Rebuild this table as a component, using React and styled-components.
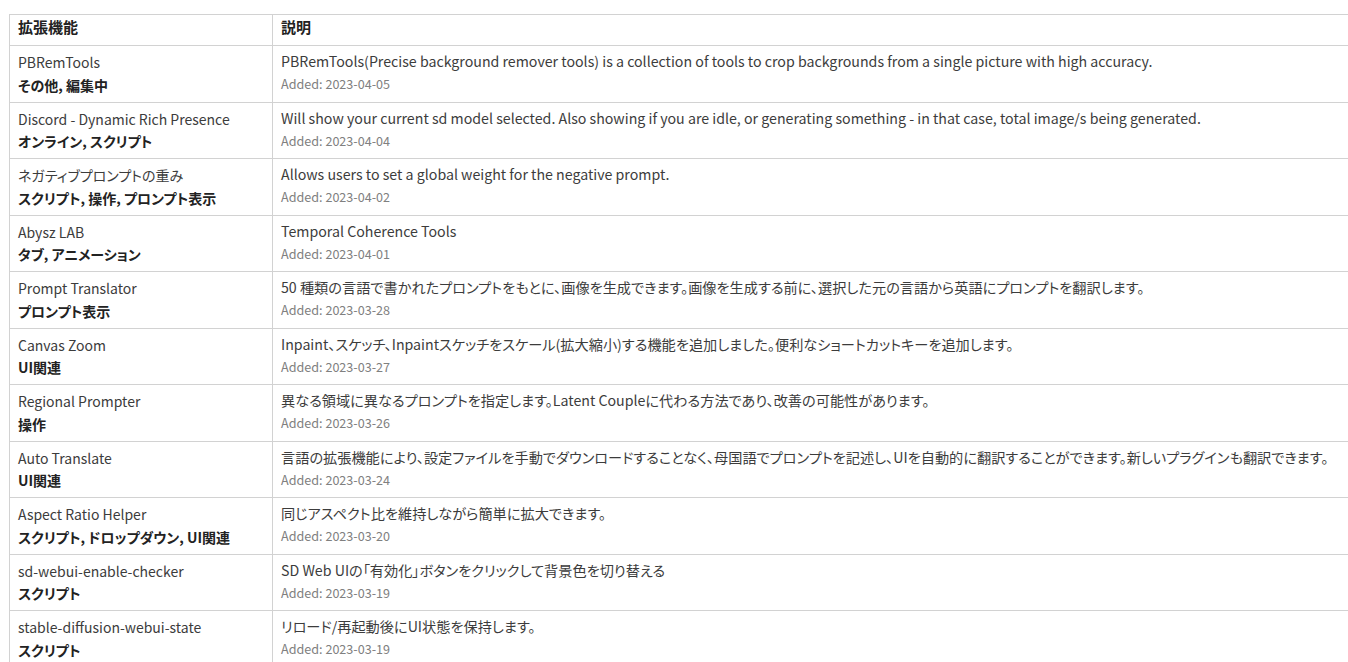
import React from 'react';
import styled, { createGlobalStyle } from 'styled-components';

const COLORS = {
  border: '#d2d2d2',
  text: '#3c3c3c',
  strong: '#222',
  muted: '#808080',
};

const GlobalStyle = createGlobalStyle`
  html, body {
    margin: 0;
    padding: 0;
    background: #fff;
    overflow: hidden;
  }
  body {
    font-family: 'Noto Sans CJK JP', 'Noto Sans', sans-serif;
    font-feature-settings: 'palt';
    color: ${COLORS.text};
  }
`;

const Page = styled.div`
  padding: 14px 0 0 9px;
  width: 1360px;
`;

const Table = styled.table`
  border-collapse: collapse;
  table-layout: fixed;
  width: 1360px;
  border-top: 1px solid ${COLORS.border};
  border-left: 1px solid ${COLORS.border};
`;

const HeadCell = styled.th`
  text-align: left;
  font-weight: 700;
  font-size: 15px;
  line-height: 22px;
  padding: 1px 8px 7px;
  color: ${COLORS.strong};
  border-right: 1px solid ${COLORS.border};
  border-bottom: 1px solid ${COLORS.border};
  width: ${(p) => (p.$narrow ? '246px' : 'auto')};
`;

const Cell = styled.td`
  vertical-align: top;
  padding: 5px 8px 5px;
  border-right: 1px solid ${COLORS.border};
  border-bottom: 1px solid ${COLORS.border};
`;

const Name = styled.div`
  font-size: 14px;
  line-height: 22.75px;
  color: ${COLORS.text};
  white-space: nowrap;
`;

const Tags = styled.div`
  font-size: 14px;
  line-height: 22.75px;
  font-weight: 700;
  color: ${COLORS.strong};
  white-space: nowrap;
`;

const Desc = styled.div`
  font-size: 14.2px;
  line-height: 20px;
  color: ${COLORS.text};
  white-space: nowrap;
`;

const Added = styled.div`
  font-size: 12.6px;
  line-height: 20px;
  margin-top: 3px;
  color: ${COLORS.muted};
`;

const rows = [
  {
    name: 'PBRemTools',
    tags: 'その他, 編集中',
    desc: 'PBRemTools(Precise background remover tools) is a collection of tools to crop backgrounds from a single picture with high accuracy.',
    date: '2023-04-05',
  },
  {
    name: 'Discord - Dynamic Rich Presence',
    tags: 'オンライン, スクリプト',
    desc: 'Will show your current sd model selected. Also showing if you are idle, or generating something - in that case, total image/s being generated.',
    date: '2023-04-04',
  },
  {
    name: 'ネガティブプロンプトの重み',
    tags: 'スクリプト, 操作, プロンプト表示',
    desc: 'Allows users to set a global weight for the negative prompt.',
    date: '2023-04-02',
  },
  {
    name: 'Abysz LAB',
    tags: 'タブ, アニメーション',
    desc: 'Temporal Coherence Tools',
    date: '2023-04-01',
  },
  {
    name: 'Prompt Translator',
    tags: 'プロンプト表示',
    desc: '50 種類の言語で書かれたプロンプトをもとに、画像を生成できます。画像を生成する前に、選択した元の言語から英語にプロンプトを翻訳します。',
    date: '2023-03-28',
  },
  {
    name: 'Canvas Zoom',
    tags: 'UI関連',
    desc: 'Inpaint、スケッチ、Inpaintスケッチをスケール(拡大縮小)する機能を追加しました。便利なショートカットキーを追加します。',
    date: '2023-03-27',
  },
  {
    name: 'Regional Prompter',
    tags: '操作',
    desc: '異なる領域に異なるプロンプトを指定します。Latent Coupleに代わる方法であり、改善の可能性があります。',
    date: '2023-03-26',
  },
  {
    name: 'Auto Translate',
    tags: 'UI関連',
    desc: '言語の拡張機能により、設定ファイルを手動でダウンロードすることなく、母国語でプロンプトを記述し、UIを自動的に翻訳することができます。新しいプラグインも翻訳できます。',
    date: '2023-03-24',
  },
  {
    name: 'Aspect Ratio Helper',
    tags: 'スクリプト, ドロップダウン, UI関連',
    desc: '同じアスペクト比を維持しながら簡単に拡大できます。',
    date: '2023-03-20',
  },
  {
    name: 'sd-webui-enable-checker',
    tags: 'スクリプト',
    desc: 'SD Web UIの「有効化」ボタンをクリックして背景色を切り替える',
    date: '2023-03-19',
  },
  {
    name: 'stable-diffusion-webui-state',
    tags: 'スクリプト',
    desc: 'リロード/再起動後にUI状態を保持します。',
    date: '2023-03-19',
  },
];

export default function App() {
  return (
    <>
      <GlobalStyle />
      <Page>
        <Table>
          <thead>
            <tr>
              <HeadCell $narrow>拡張機能</HeadCell>
              <HeadCell>説明</HeadCell>
            </tr>
          </thead>
          <tbody>
            {rows.map((r) => (
              <tr key={r.name}>
                <Cell>
                  <Name>{r.name}</Name>
                  <Tags>{r.tags}</Tags>
                </Cell>
                <Cell>
                  <Desc>{r.desc}</Desc>
                  <Added>Added: {r.date}</Added>
                </Cell>
              </tr>
            ))}
          </tbody>
        </Table>
      </Page>
    </>
  );
}
